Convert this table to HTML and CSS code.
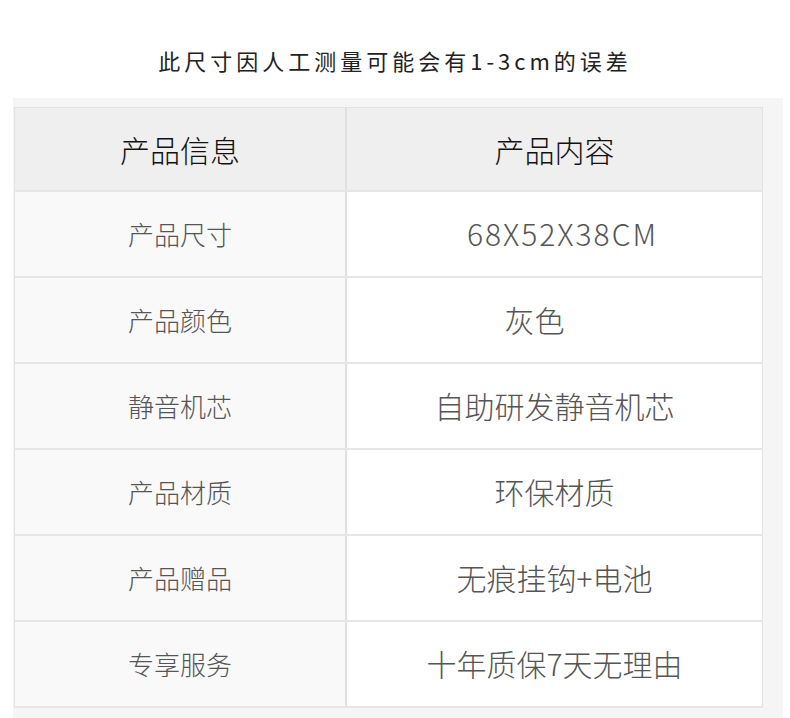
FILE: index.html
```html
<!DOCTYPE html>
<html lang="zh">
<head>
<meta charset="utf-8">
<link rel="stylesheet" href="styles.css">
</head>
<body>
<h1 class="title">此尺寸因人工测量可能会有1-3cm的误差</h1>
<div class="panel">
  <table class="spec">
    <thead>
      <tr><th>产品信息</th><th>产品内容</th></tr>
    </thead>
    <tbody>
      <tr><td class="label">产品尺寸</td><td class="value shift-right latin">68X52X38CM</td></tr>
      <tr><td class="label">产品颜色</td><td class="value shift-left">灰色</td></tr>
      <tr><td class="label">静音机芯</td><td class="value">自助研发静音机芯</td></tr>
      <tr><td class="label">产品材质</td><td class="value">环保材质</td></tr>
      <tr><td class="label">产品赠品</td><td class="value">无痕挂钩+电池</td></tr>
      <tr><td class="label">专享服务</td><td class="value">十年质保7天无理由</td></tr>
    </tbody>
  </table>
</div>
</body>
</html>
```
FILE: styles.css
```css
html, body {
  margin: 0;
  padding: 0;
  background: #ffffff;
}
body {
  width: 790px;
  height: 718px;
  overflow: hidden;
  font-family: "Noto Sans CJK SC", "Noto Sans", sans-serif;
  font-weight: 300;
}
.title {
  margin: 0;
  height: 98px;
  box-sizing: border-box;
  padding-top: 44px;
  text-align: center;
  font-size: 22px;
  line-height: 32px;
  font-weight: 400;
  letter-spacing: 4px;
  color: #222;
}
.panel {
  margin-left: 13px;
  width: 770px;
  height: 630px;
  box-sizing: border-box;
  padding: 9px 0 0 1px;
  background: #f5f5f5;
}
.spec {
  width: 749px;
  border-collapse: collapse;
  border: 1px solid #e2e2e2;
  table-layout: fixed;
}
.spec th, .spec td {
  padding: 0;
  text-align: center;
  border-top: 2px solid #e6e6e6;
  border-bottom: 2px solid #e6e6e6;
}
.spec th:first-child, .spec td:first-child {
  width: 330px;
  border-right: 2px solid #e0e0e0;
}
.spec th {
  height: 82px;
  background: #efefef;
  font-size: 30px;
  font-weight: 300;
  color: #111;
  border-top: 1px solid #e2e2e2;
}
.spec td {
  height: 82px;
  padding-bottom: 2px;
}
.label {
  background: #f9f9f9;
  font-size: 26px;
  color: #555;
}
.value {
  background: #ffffff;
  font-size: 30px;
  color: #555;
}
.latin {
  letter-spacing: 2px;
}
.shift-right { padding-left: 16px !important; }
.shift-left { padding-right: 40px !important; }
```
